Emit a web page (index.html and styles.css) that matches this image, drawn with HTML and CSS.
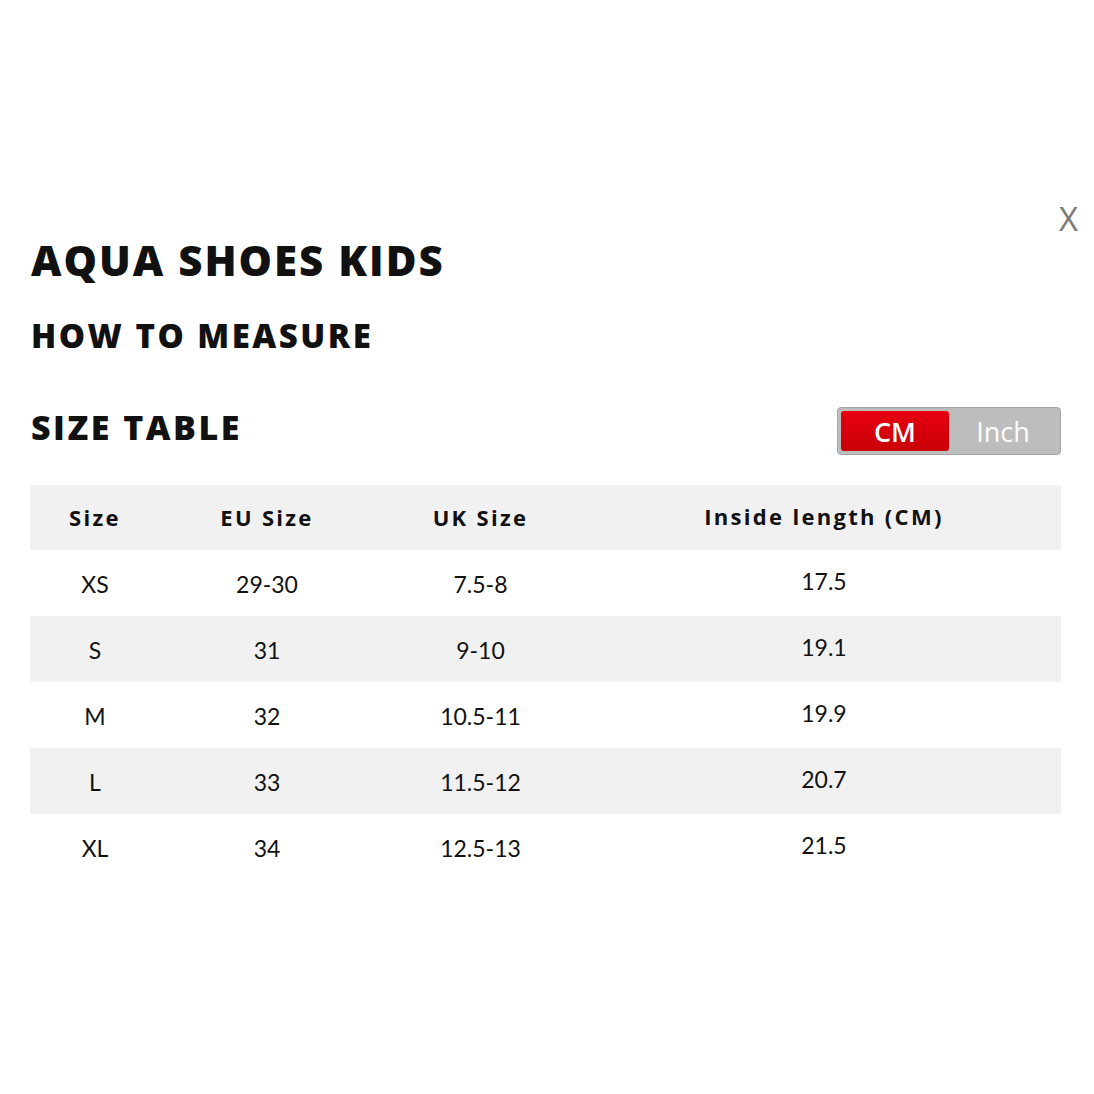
FILE: index.html
```html
<!DOCTYPE html>
<html>
<head>
<meta charset="utf-8">
<link rel="stylesheet" href="styles.css">
</head>
<body>
<div class="modal">
  <div class="close">X</div>
  <h1 class="title">AQUA SHOES KIDS</h1>
  <h2 class="subtitle">HOW TO MEASURE</h2>
  <div class="table-head">
    <h2 class="subtitle size-title">SIZE TABLE</h2>
    <div class="toggle">
      <span class="opt active">CM</span>
      <span class="opt">Inch</span>
    </div>
  </div>
  <table class="sizes">
    <thead>
      <tr><th class="c1">Size</th><th class="c2">EU Size</th><th class="c3">UK Size</th><th class="c4">Inside length (CM)</th></tr>
    </thead>
    <tbody>
      <tr><td>XS</td><td>29-30</td><td>7.5-8</td><td class="len">17.5</td></tr>
      <tr><td>S</td><td>31</td><td>9-10</td><td class="len">19.1</td></tr>
      <tr><td>M</td><td>32</td><td>10.5-11</td><td class="len">19.9</td></tr>
      <tr><td>L</td><td>33</td><td>11.5-12</td><td class="len">20.7</td></tr>
      <tr><td>XL</td><td>34</td><td>12.5-13</td><td class="len">21.5</td></tr>
    </tbody>
  </table>
</div>
</body>
</html>
```
FILE: styles.css
```css
* { box-sizing: border-box; }
html, body { margin: 0; padding: 0; background: #fff; }
body { font-family: "Open Sans", sans-serif; color: #111; }
.modal { position: relative; padding: 233px 33px 0 30px; width: 1094px; }
.close {
  position: absolute; top: 202px; left: 1059px;
  font-family: "Open Sans", sans-serif; font-size: 33px; font-weight: 400; color: #7a7a7a; line-height: 1;
}
.title { margin: 0; font-family: "Open Sans", sans-serif; font-weight: 800; font-size: 42px; line-height: 54px; letter-spacing: 2px; padding-left: 1px; }
.subtitle { margin: 0; font-family: "Open Sans", sans-serif; font-weight: 800; font-size: 33px; line-height: 44px; letter-spacing: 2.5px; padding-left: 1px; }
.title + .subtitle { margin-top: 27px; }
.table-head { display: flex; justify-content: space-between; align-items: center; margin-top: 49px; }
.size-title { font-size: 34px; margin-top: -9px; }
.toggle {
  display: flex; width: 224px; height: 48px; padding: 3px;
  background: #bdbdbd; border: 1px solid #a6a6a6; border-radius: 4px;
}
.opt { flex: 1; display: flex; align-items: center; justify-content: center; font-family: "Open Sans", sans-serif; font-size: 27px; color: #fcfcfc; }
.opt.active { flex: 0 0 108px; background: linear-gradient(#e6000f, #c80008); border-radius: 3px; color: #fff; font-weight: 600; }
.sizes { width: 1031px; margin-top: 30px; border-collapse: collapse; table-layout: fixed; }
.sizes th, .sizes td { text-align: center; padding: 0; }
.sizes th { height: 65px; background: #f1f1f1; font-family: "Open Sans", sans-serif; font-weight: 700; font-size: 22px; letter-spacing: 2.3px; padding-bottom: 1px; }
.sizes td { height: 66px; font-family: "Lato", sans-serif; font-size: 23px; padding-top: 2px; }
.sizes td.len { padding-top: 0; padding-bottom: 4px; }
.sizes th.c4 { padding-bottom: 4px; }
.c1 { width: 130px; }
.c2 { width: 214px; }
.c3 { width: 213px; }
.c4 { width: 474px; }
.sizes tbody tr:nth-child(even) td { background: #f1f1f1; }
```
